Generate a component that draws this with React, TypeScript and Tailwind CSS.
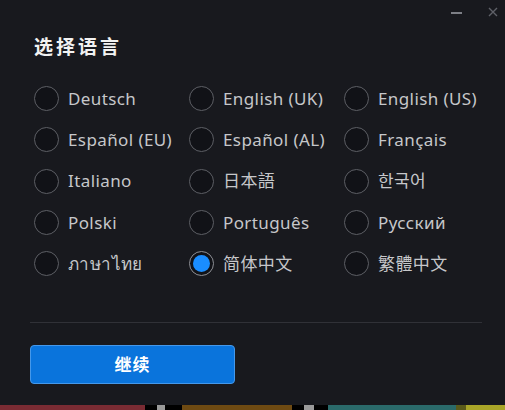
import React, { useState } from 'react';

const languages = [
  'Deutsch', 'English (UK)', 'English (US)',
  'Español (EU)', 'Español (AL)', 'Français',
  'Italiano', '日本語', '한국어',
  'Polski', 'Português', 'Русский',
  'ภาษาไทย', '简体中文', '繁體中文',
];

const font = { fontFamily: '"Noto Sans", "Noto Sans CJK SC", "Noto Sans CJK JP", "Noto Sans CJK KR", sans-serif' };

const App: React.FC = () => {
  const [selected, setSelected] = useState('简体中文');

  return (
    <div className="w-[505px] h-[410px] flex flex-col bg-black overflow-hidden" style={font}>
      <div className="h-[405px] bg-[#18191e] flex flex-col">
        {/* window controls */}
        <div className="h-[28px] flex items-center justify-end gap-[26px] pr-[7px]">
          <div className="w-[11px] h-[1.5px] bg-[#7d7f86] mt-[-2px]" />
          <svg width="10" height="10" viewBox="0 0 10 10" className="mt-[-4px]">
            <path d="M1 1 L9 9 M9 1 L1 9" stroke="#5f6168" strokeWidth="1.4" />
          </svg>
        </div>

        <h1 className="mt-[6px] pl-[34px] text-[19px] leading-[26px] font-bold tracking-[3px] text-[#f2f2f2]">
          选择语言
        </h1>

        <div className="mt-[18px] pl-[34px] grid grid-cols-[155px_155px_155px] auto-rows-[41.3px]">
          {languages.map((lang) => {
            const on = lang === selected;
            return (
              <button
                key={lang}
                onClick={() => setSelected(lang)}
                className="flex items-center gap-[9px] text-left"
              >
                <span
                  className={`w-[25px] h-[25px] rounded-full flex items-center justify-center shrink-0 border-[1.5px] bg-[#111217] ${
                    on ? 'border-[#8e9096]' : 'border-[#5d5f65]'
                  }`}
                >
                  {on && <span className="w-[17px] h-[17px] rounded-full bg-[#1a8dff]" />}
                </span>
                <span className="text-[17px] tracking-[0.4px] text-[#c6c7ca] whitespace-nowrap">{lang}</span>
              </button>
            );
          })}
        </div>

        <div className="mt-[38px] mx-[30px] w-[452px] h-px bg-[#303137]" />

        <div className="mt-[22px] pl-[30px]">
          <button className="w-[205px] h-[39px] rounded-[4px] bg-[#0a74dc] border border-[#4598ea] text-white text-[17px] font-bold tracking-[1px]">
            继续
          </button>
        </div>
      </div>

      {/* page behind the dialog */}
      <div className="h-[5px] flex">
        <div className="w-[145px] bg-[#7a2b33]" />
        <div className="w-[12px] bg-black" />
        <div className="w-[8px] bg-[#9a9a9a]" />
        <div className="w-[17px] bg-black" />
        <div className="w-[110px] bg-[#6e4a12]" />
        <div className="w-[12px] bg-black" />
        <div className="w-[10px] bg-[#9a9a9a]" />
        <div className="w-[14px] bg-black" />
        <div className="w-[128px] bg-[#2a6a6a]" />
        <div className="w-[10px] bg-[#5a5a1a]" />
        <div className="flex-1 bg-[#a9a528]" />
      </div>
    </div>
  );
};

export default App;
